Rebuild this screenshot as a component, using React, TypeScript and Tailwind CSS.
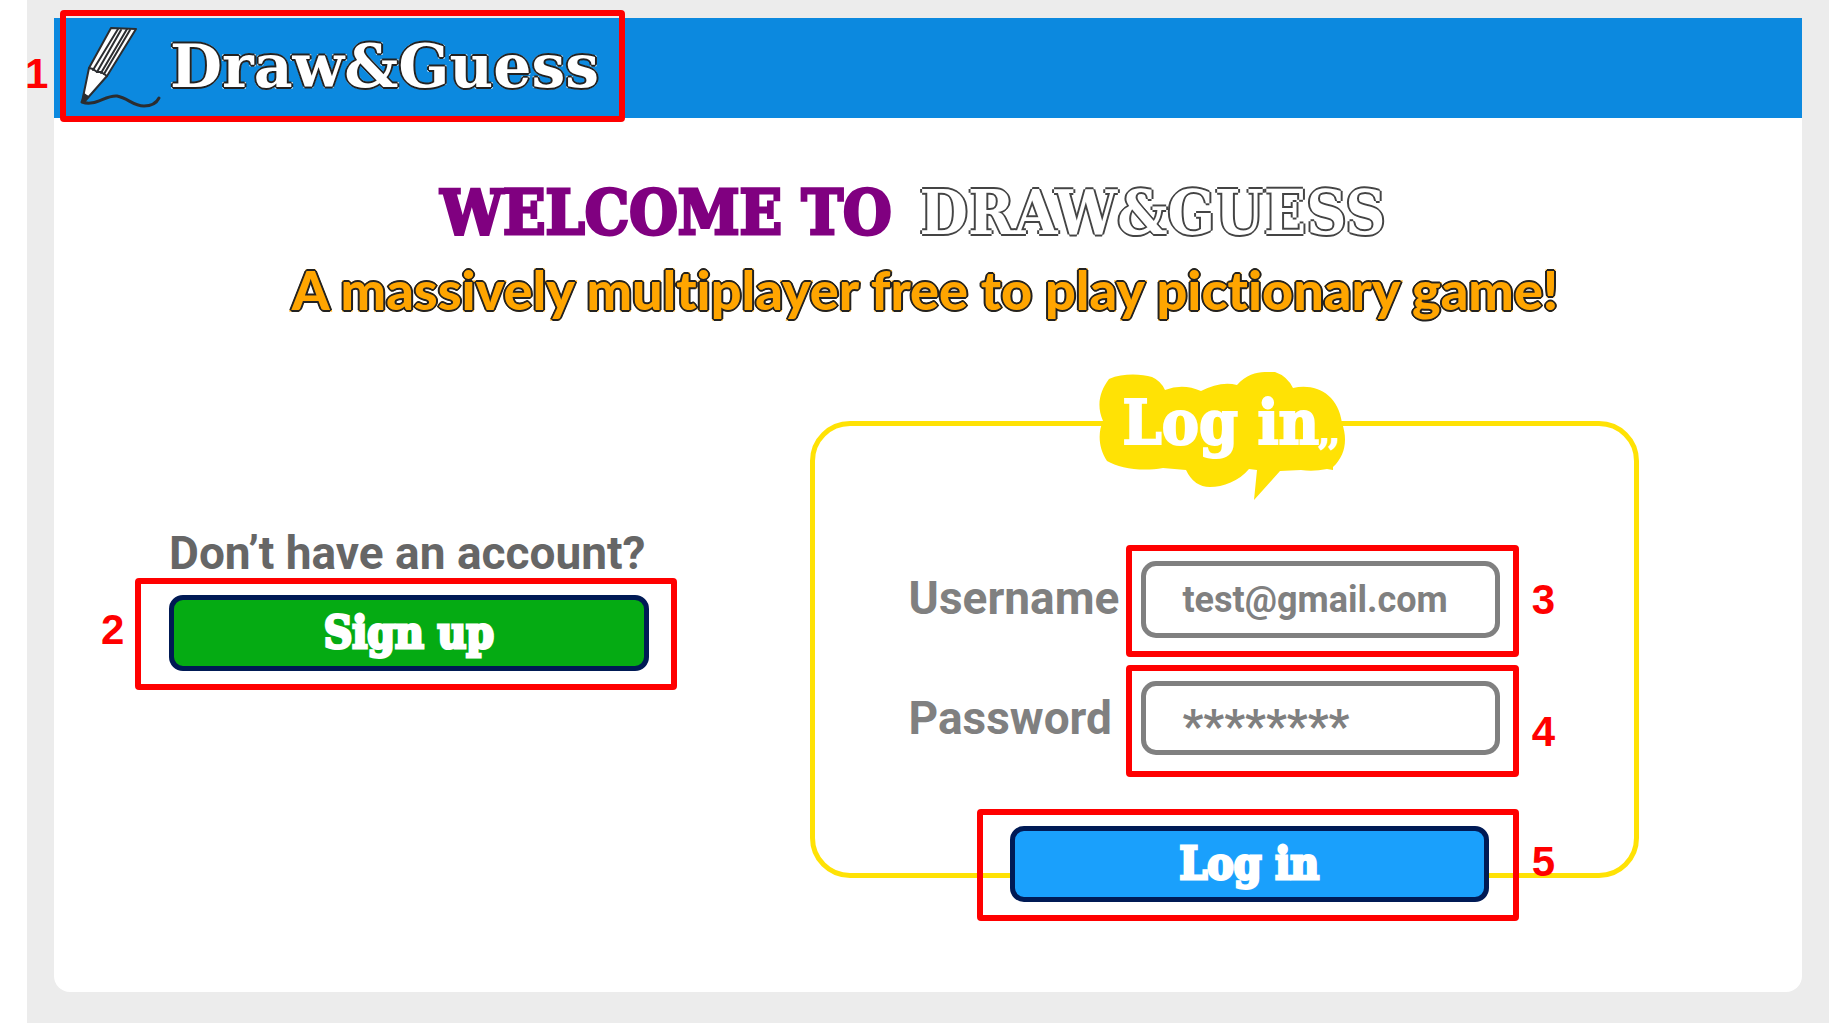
import type { ReactNode } from "react";

const slab =
  "font-['DejaVu_Serif_Condensed','DejaVu_Serif',serif] font-bold [paint-order:stroke_fill]";

const outline =
  "[text-shadow:2px_0_0_#222,-2px_0_0_#222,0_2px_0_#222,0_-2px_0_#222,1px_1px_0_#222,-1px_1px_0_#222,1px_-1px_0_#222,-1px_-1px_0_#222]";

function Callout({
  number,
  side,
  className = "",
  children,
}: {
  number: number;
  side: string;
  className?: string;
  children: ReactNode;
}) {
  return (
    <div className={`relative rounded-sm border-6 border-[#ff0000] ${className}`}>
      <span
        className={`absolute font-['Liberation_Sans',sans-serif] text-[42px] leading-none font-bold text-[#ff0000] ${side}`}
      >
        {number}
      </span>
      {children}
    </div>
  );
}

function Pencil() {
  return (
    <svg
      viewBox="78 24 84 86"
      className="h-[86px] w-[84px] shrink-0"
      fill="none"
      stroke="#2b2d30"
      strokeWidth="2"
      strokeLinejoin="round"
      strokeLinecap="round"
      aria-hidden="true"
    >
      <path d="M111 29 L136 30 L107 77 L85 102 L82 103 L89 69 Z" fill="#fff" />
      <path d="M118 30 L93 71 M121 31 L97 73 M127 30 L101 74 M130 31 L104 75" strokeWidth="2" />
      <path d="M89 69 L93 70 L97 73 L101 73 L107 77 M84 95 L88 98" />
      <path d="M82 103 L84 96 L88 98 Z" fill="#2b2d30" />
      <path d="M82 103 C95 108 105 96 117 97 C128 99 133 107 144 107 C152 107 157 103 159 99" strokeWidth="3" />
    </svg>
  );
}

function CloudTitle() {
  return (
    <div className="absolute -top-[54px] left-[284px]">
      <svg viewBox="0 0 246 130" className="h-[130px] w-[246px]" aria-hidden="true">
        <path
          fill="#ffe205"
          d="M10 7 C24 1 42 2 53 5 Q62 9 66 18 Q84 11 102 19 C114 13 126 10 138 13 C151 -2 167 0 176 0 Q188 4 194 16 C217 11 239 22 243 51 C249 68 246 84 234 95 L234 98 L228 97 Q214 100 202 98 L181 99 L155 128 L158 98 L150 97 C140 109 124 115 111 115 Q95 115 87 98 L64 96 C42 100 20 96 8 89 C-1 75 -1 60 4 49 C-3 33 1 19 10 7 Z"
        />
      </svg>
      <h2
        className={`absolute top-[15px] left-[24px] text-[62px] leading-[72px] whitespace-nowrap text-white [-webkit-text-stroke:2px_white] ${slab}`}
      >
        Log in<span className="text-[32px]">,,</span>
      </h2>
    </div>
  );
}

const field =
  "block w-full rounded-[15px] border-5 border-[#808080] bg-white px-9 font-['Roboto',sans-serif] font-bold text-[#808080] outline-none";
const label = "pb-[6px] font-['Roboto',sans-serif] text-[46px] leading-[54px] font-bold text-[#808080]";
const action = `block h-[76px] w-full rounded-[14px] border-5 border-[#001a55] text-[44px] leading-none text-white [-webkit-text-stroke:3px_white] ${slab}`;

export default function App() {
  return (
    <div className="min-h-screen bg-white pl-[27px]">
      <div className="min-h-screen bg-[#ececec] px-[27px] pt-[18px] pb-[30px]">
        <div className="rounded-b-[16px] bg-white pb-[114px]">
          <header className="flex h-[100px] items-start bg-[#0c89df] pl-[6px]">
            <Callout number={1} side="top-[37px] -left-[41px]" className="-mt-2 h-[112px] w-[565px]">
              <a href="#" className="flex h-full items-center gap-2 pl-3">
                <Pencil />
                <span
                  className={`font-['DejaVu_Serif',serif] text-[60px] leading-none font-bold whitespace-nowrap text-white [-webkit-text-stroke:3px_white] [paint-order:stroke_fill] ${outline}`}
                >
                  Draw&amp;Guess
                </span>
              </a>
            </Callout>
          </header>

          <main>
            <h1
              className={`flex justify-center gap-7 pt-[55px] pr-[30px] text-[62px] leading-[80px] whitespace-nowrap ${slab}`}
            >
              <span className="text-[#800080] [-webkit-text-stroke:3px_#800080]">WELCOME TO</span>
              <span className="text-white [-webkit-text-stroke:3px_white] [text-shadow:2px_0_0_#444,-2px_0_0_#444,0_2px_0_#444,0_-2px_0_#444]">
                DRAW&amp;GUESS
              </span>
            </h1>
            <p
              className={`pt-[5px] pr-[6px] text-center font-['Lato',sans-serif] text-[54px] leading-[64px] font-black whitespace-nowrap text-[#ffa500] [-webkit-text-stroke:3px_#ffa500] [font-variant-ligatures:none] [paint-order:stroke_fill] ${outline}`}
            >
              A massively multiplayer free to play pictionary game!
            </p>

            <div className="grid grid-cols-[542fr_830fr] items-start gap-[133px] pt-[99px] pr-[163px] pl-[81px]">
              <section className="pt-[108px]">
                <p className="pl-[34px] font-['Roboto',sans-serif] text-[46px] leading-[49px] font-bold whitespace-nowrap text-[#666]">
                  Don’t have an account?
                </p>
                <Callout number={2} side="top-[25px] -left-[40px]" className="pt-[11px] pr-[22px] pb-[13px] pl-[28px]">
                  <button type="button" className={`bg-[#05ab13] ${action}`}>
                    Sign up
                  </button>
                </Callout>
              </section>

              <section className="relative rounded-[40px] border-5 border-[#ffe205]">
                <CloudTitle />
                <form className="grid grid-cols-[218fr_393fr] items-center gap-y-2 pt-[119px] pr-[115px] pl-[94px]">
                  <label htmlFor="username" className={label}>
                    Username
                  </label>
                  <Callout number={3} side="top-[28px] -right-[42px]" className="pt-[10px] pr-[13px] pb-[13px] pl-[9px]">
                    <input
                      id="username"
                      type="text"
                      defaultValue="test@gmail.com"
                      className={`h-[77px] text-[36px] ${field}`}
                    />
                  </Callout>
                  <label htmlFor="password" className={label}>
                    Password
                  </label>
                  <Callout number={4} side="top-[40px] -right-[42px]" className="pt-[10px] pr-[13px] pb-[16px] pl-[9px]">
                    <input
                      id="password"
                      type="text"
                      autoComplete="off"
                      defaultValue="********"
                      className={`h-[74px] pt-4 text-[46px] ${field}`}
                    />
                  </Callout>
                  <Callout
                    number={5}
                    side="top-[26px] -right-[42px]"
                    className="col-span-2 mt-[24px] -mb-[48px] ml-[68px] pt-[11px] pr-[24px] pb-[13px] pl-[27px]"
                  >
                    <button type="submit" className={`bg-[#1aa0fc] ${action}`}>
                      Log in
                    </button>
                  </Callout>
                </form>
              </section>
            </div>
          </main>
        </div>
      </div>
    </div>
  );
}
